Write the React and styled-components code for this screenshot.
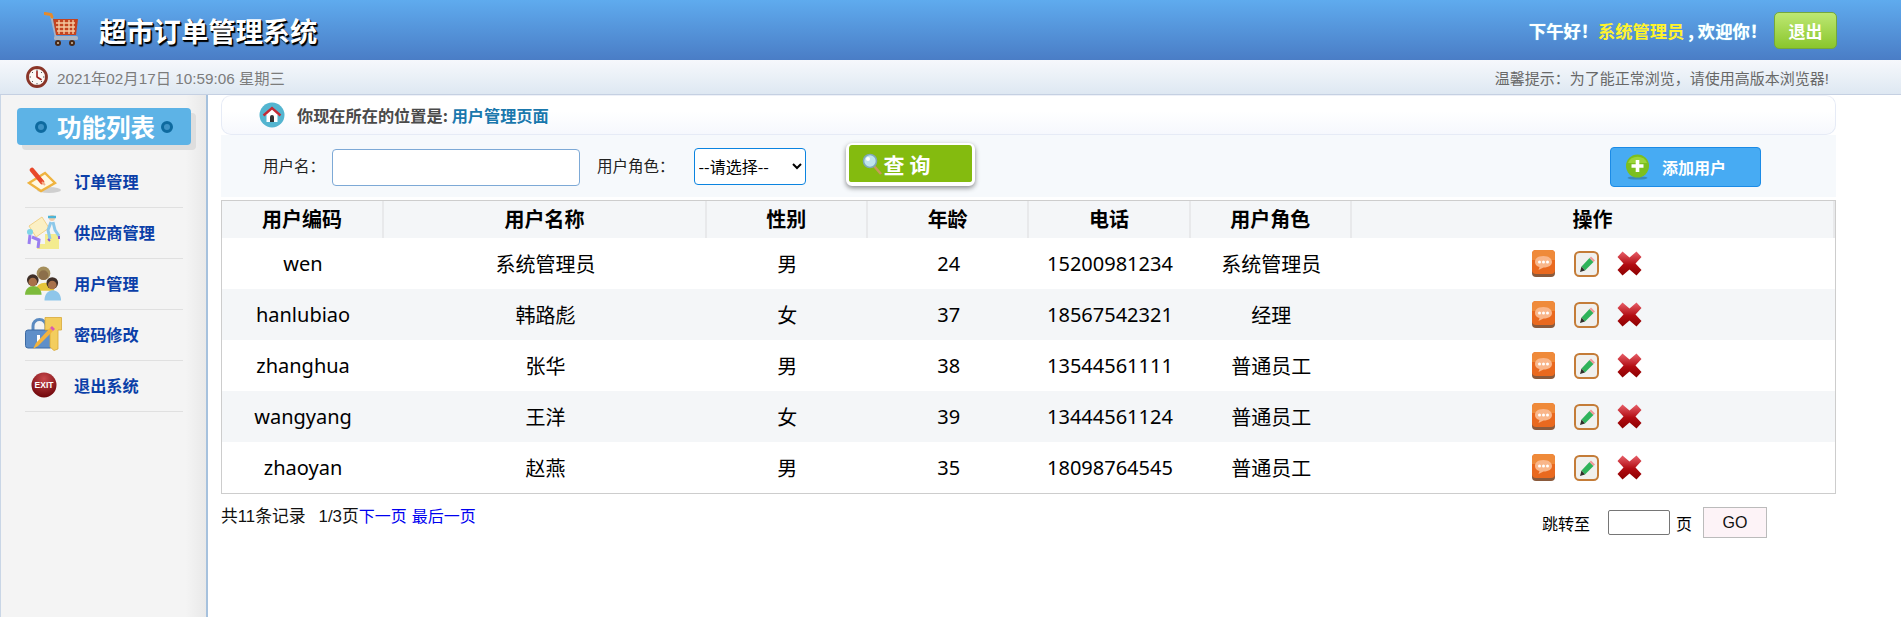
import React from 'react'
import styled, { createGlobalStyle } from 'styled-components'

const GlobalStyle = createGlobalStyle`
  html, body { margin: 0; padding: 0; height: 100%; background: #fff; overflow: hidden; }
  body { font-family: "Noto Sans", "Noto Sans CJK SC", sans-serif; color: #000; }
  * { box-sizing: border-box; }
`

const Page = styled.div`
  display: flex;
  flex-direction: column;
  height: 100vh;
`

const Header = styled.header`
  flex: none;
  height: 60px;
  display: flex;
  align-items: center;
  justify-content: space-between;
  padding: 0 64px 0 44px;
  background: linear-gradient(to bottom, #5fabee, #4a7dc6);
`

const Brand = styled.div`
  display: flex;
  align-items: center;
  gap: 19px;
`

const BrandTitle = styled.h1`
  margin: 0;
  font-family: "Noto Sans CJK SC", sans-serif;
  font-size: 27.3px;
  line-height: 60px;
  font-weight: 700;
  color: #fff;
  text-shadow: 1px 1px 0 #000, 1.5px 1.5px 1px #000;
`

const UserArea = styled.div`
  display: flex;
  align-items: center;
  gap: 7px;
`

const Greeting = styled.p`
  margin: 0;
  font-family: "Noto Sans CJK SC", sans-serif;
  font-size: 17.3px;
  font-weight: 700;
  color: #fff;
  text-shadow: 0 0 1px #9ff;
`

const UserName = styled.span`
  color: #fff32b;
  text-shadow: none;
`

const LogoutButton = styled.a`
  display: flex;
  align-items: center;
  justify-content: center;
  width: 63px;
  height: 37px;
  border: 1px solid #74a83c;
  border-radius: 5px;
  background: linear-gradient(to bottom, #bde873, #8ac62c);
  font-family: "Noto Sans CJK SC", sans-serif;
  font-size: 17px;
  font-weight: 700;
  color: #fff;
`

const StatusBar = styled.div`
  flex: none;
  height: 35px;
  display: flex;
  align-items: center;
  justify-content: space-between;
  padding: 0 72px 0 26px;
  border-bottom: 1px solid #c5d0e2;
  background: linear-gradient(to bottom, #f6f8fc, #dee8f2);
  font-family: "Liberation Sans", "Noto Sans CJK SC", sans-serif;
  font-size: 15.3px;
  color: #7c7c7c;
`

const Clock = styled.div`
  display: flex;
  align-items: center;
  gap: 9px;
`

const Tip = styled.div`
  font-size: 15px;
  color: #686868;
`

const Body = styled.div`
  flex: 1;
  display: flex;
  min-height: 0;
`

const Sidebar = styled.aside`
  flex: none;
  width: 208px;
  padding: 13px 24px 0 1px;
  border-left: 1px solid #c9d6e6;
  border-right: 2px solid #a6c1dd;
  background: linear-gradient(to right, #f4f4f4 90%, #e9e9e9);
`

const MenuTitle = styled.div`
  display: flex;
  align-items: center;
  justify-content: center;
  gap: 8px;
  width: 174px;
  height: 37px;
  margin-left: 15px;
  border-radius: 4px;
  background: #5db3e6;
  box-shadow: 5px 5px 0 #dedede;
  font-family: "Noto Sans CJK SC", sans-serif;
  font-size: 24.5px;
  font-weight: 700;
  color: #fff;
`

const MenuTitleText = styled.span`
  margin: 0 -2px 0 2px;
`

const MenuDot = styled.span`
  width: 12px;
  height: 12px;
  border-radius: 50%;
  border: 3px solid #0e6a9f;
  background: #3f93c6;
`

const Menu = styled.ul`
  list-style: none;
  margin: 12px 0 0 23px;
  padding: 0;
`

const MenuItem = styled.li`
  display: flex;
  align-items: center;
  gap: 12px;
  width: 158px;
  height: 51px;
  padding-bottom: 2px;
  border-bottom: 1px solid #e0e0e0;
  font-family: "Noto Sans CJK SC", sans-serif;
  font-size: 16.2px;
  font-weight: 700;
  color: #0b3fa8;
`

const MenuIcon = styled.span`
  display: flex;
  justify-content: center;
  width: 37px;
`

const Main = styled.main`
  flex: 1;
  min-width: 0;
  padding: 0 65px 0 13px;
`

const Location = styled.div`
  display: flex;
  align-items: center;
  gap: 12px;
  height: 40px;
  padding-left: 37px;
  border: 1px solid #e6ebf6;
  border-top-color: #eef1f8;
  border-radius: 10px;
  background: linear-gradient(to bottom, #fff 40%, #f6f8fd);
  font-family: "Noto Sans CJK SC", sans-serif;
  font-size: 16.2px;
  font-weight: 700;
  color: #4a4a4a;
`

const LocationLink = styled.span`
  color: #1a78ad;
`

const SearchBar = styled.div`
  display: flex;
  align-items: center;
  height: 62px;
  padding-left: 42px;
  background: #f6f9fc;
`

const FieldLabel = styled.label`
  font-family: "Noto Sans CJK SC", sans-serif;
  font-size: 15.5px;
  color: #222;
  margin-right: ${props => props.$gap}px;
  padding-bottom: 2px;
`

const TextInput = styled.input`
  width: 248px;
  height: 37px;
  margin-top: 2px;
  margin-right: 17px;
  border: 1px solid #7da9d6;
  border-radius: 4px;
  background: #fff;
`

const RoleSelect = styled.select`
  width: 112px;
  height: 37px;
  margin-right: 40px;
  border: 1px solid #0b84e0;
  border-radius: 4px;
  background: #fff;
  font-family: "Noto Sans CJK SC", sans-serif;
  font-size: 16px;
  color: #000;
`

const SearchButton = styled.button`
  display: flex;
  align-items: center;
  gap: 2px;
  align-self: flex-start;
  width: 129px;
  height: 43px;
  margin-top: 8px;
  padding: 0 0 0 13px;
  border: 3px solid #fff;
  border-top-width: 2px;
  border-bottom-width: 4px;
  border-radius: 6px;
  background: #84bb0f;
  box-shadow: 0 2px 5px rgba(0, 0, 0, 0.45);
  font-family: "Noto Sans CJK SC", sans-serif;
  font-size: 21px;
  font-weight: 700;
  letter-spacing: 5px;
  color: #fff;
`

const AddButton = styled.a`
  display: flex;
  align-items: center;
  gap: 12px;
  width: 151px;
  height: 40px;
  margin-top: 2px;
  margin-left: auto;
  margin-right: 75px;
  padding-left: 14px;
  border: 1px solid #1b8be6;
  border-radius: 4px;
  background: #47abf3;
  font-family: "Noto Sans CJK SC", sans-serif;
  font-size: 16px;
  font-weight: 700;
  color: #fff;
`

const Table = styled.table`
  width: 100%;
  margin-top: 3px;
  border: 1px solid #cdcdcd;
  border-collapse: separate;
  border-spacing: 0;
  table-layout: fixed;
  font-size: 20px;
  text-align: center;
`

const HeadCell = styled.th`
  width: ${props => props.$width}%;
  height: 37px;
  padding: 0 0 2px;
  border-right: 2px solid #e8e9eb;
  background: #f4f6f8;
  font-family: "Noto Sans CJK SC", sans-serif;
  font-size: 20px;
  font-weight: 700;
`

const Row = styled.tr`
  background: ${props => (props.$striped ? '#f4f6f8' : '#fff')};
`

const Cell = styled.td`
  height: 51px;
  padding: 0;
`

const Actions = styled.div`
  display: flex;
  justify-content: center;
  align-items: center;
  gap: 18px;
  padding-right: 12px;
`

const Footer = styled.div`
  display: flex;
  justify-content: space-between;
  font-family: "Liberation Sans", "Noto Sans CJK SC", sans-serif;
  font-size: 16px;
`

const PageInfo = styled.div`
  margin-top: 12px;
  line-height: 22px;
  color: #111;
`

const RecordCount = styled.span`
  font-size: 16.8px;
`

const PageLink = styled.a`
  color: #0000f0;
  margin-right: 5px;
`

const PageSpacer = styled.span`
  margin-left: 13px;
  font-size: 16.8px;
`

const Jump = styled.div`
  display: flex;
  align-items: center;
  height: 31px;
  margin-top: 13px;
  margin-right: 69px;
`

const JumpInput = styled.input`
  width: 62px;
  height: 25px;
  margin: 0 6px 0 18px;
  border: 1px solid #767676;
  border-radius: 2px;
`

const GoButton = styled.button`
  width: 64px;
  height: 31px;
  margin-left: 11px;
  border: 1px solid #bbb;
  background: #fdf3f7;
  font-family: "Liberation Sans", sans-serif;
  font-size: 16px;
  color: #111;
`

const CartIcon = () => (
  <svg width="36" height="36" viewBox="0 0 36 36">
    <path d="M7 3 L12 26 H30" fill="none" stroke="#a5b3c6" strokeWidth="2" />
    <path d="M1 1.5 L7 2.5 L8 5" fill="none" stroke="#e58a2b" strokeWidth="3" strokeLinecap="round" />
    <path d="M9 7 H34 L32 23 H12 Z" fill="#c4431f" />
    <path d="M12 11 H31 M12 15 H31 M13 19 H31 M15 8 V22 M20 8 V22 M25 8 V22 M29 8 V22" stroke="#f3c9a0" strokeWidth="1.4" />
    <rect x="10" y="24" width="24" height="4" rx="1.5" fill="#aab6c4" />
    <circle cx="14" cy="31" r="3" fill="#4a2a18" />
    <circle cx="28" cy="31" r="3" fill="#4a2a18" />
    <circle cx="14" cy="31" r="1" fill="#d7c2a8" />
    <circle cx="28" cy="31" r="1" fill="#d7c2a8" />
  </svg>
)

const ClockIcon = () => (
  <svg width="22" height="22" viewBox="0 0 22 22">
    <circle cx="11" cy="11" r="9.5" fill="#fbf8f4" stroke="#8a3528" strokeWidth="2.8" />
    <path d="M11 3.5 V5 M11 17 V18.5 M3.5 11 H5 M17 11 H18.5 M6 6 L7 7 M16 6 L15 7 M6 16 L7 15 M16 16 L15 15" stroke="#555" strokeWidth="1" />
    <path d="M11 11 V5.5 M11 11 L15 13.5" stroke="#9a1f1a" strokeWidth="1.6" strokeLinecap="round" />
  </svg>
)

const HomeIcon = () => (
  <svg width="26" height="26" viewBox="0 0 26 26">
    <circle cx="13" cy="13" r="12.5" fill="#54b5d0" />
    <path d="M13 6 L21 13 H18.5 V20 H7.5 V13 H5 Z" fill="#fff" />
    <path d="M4.5 13.5 L13 6 L21.5 13.5" fill="none" stroke="#c32a35" strokeWidth="2.4" />
    <path d="M11 20 V15 A2 2 0 0 1 15 15 V20 Z" fill="#333" />
  </svg>
)

const OrderIcon = () => (
  <svg width="34" height="28" viewBox="0 0 34 28">
    <ellipse cx="22" cy="23" rx="12" ry="3" fill="#cfcfcf" />
    <path d="M2 16 L18 6 L28 16 L14 24 Z" fill="#fff8e2" stroke="#efb33f" strokeWidth="2.4" />
    <path d="M5 3 L15 15" stroke="#e8482a" strokeWidth="4.5" strokeLinecap="round" />
    <path d="M15 15 L18 18" stroke="#f4b08a" strokeWidth="2" />
  </svg>
)

const SupplierIcon = () => (
  <svg width="37" height="36" viewBox="0 0 37 36">
    <path d="M20 20 H34 V35 H12 V30 H20 Z" fill="#f3eb8e" />
    <path d="M4 12 L17 3 L24 14 L11 23 Z" fill="#fbf0c4" stroke="#f1d28a" />
    <circle cx="27" cy="4" r="3" fill="#f5cba7" />
    <path d="M23 3 H31" stroke="#4db4d6" strokeWidth="2.5" />
    <path d="M26 8 L23 16 L25 25 M28 8 L30 16 L34 22" stroke="#8cc8ea" strokeWidth="3" fill="none" />
    <path d="M23 25 L25 27 M34 22 L34 25" stroke="#8b5fd8" strokeWidth="2" />
    <circle cx="5" cy="18" r="3" fill="#7fd4e6" />
    <path d="M5 21 L4 30 M7 23 L14 26 L13 34" stroke="#9a7ff0" strokeWidth="3" fill="none" />
  </svg>
)

const UsersIcon = () => (
  <svg width="38" height="36" viewBox="0 0 38 36">
    <path d="M11 26 C11 15 30 15 30 26 Z" fill="#e6c53c" />
    <circle cx="19" cy="8" r="7" fill="#a58f5c" />
    <circle cx="19" cy="10" r="5" fill="#8c6f4a" />
    <path d="M0 30 C0 18 17 18 17 30 Z" fill="#7dbb3c" />
    <circle cx="8" cy="15" r="6" fill="#3f2f28" />
    <circle cx="8" cy="17" r="4.4" fill="#a8714a" />
    <path d="M20 36 C20 22 37 22 37 36 Z" fill="#8ec6ea" />
    <circle cx="28" cy="18" r="6" fill="#3f2f28" />
    <circle cx="28" cy="20" r="4.4" fill="#a8714a" />
  </svg>
)

const PasswordIcon = () => (
  <svg width="37" height="34" viewBox="0 0 37 34">
    <path d="M8 14 V9 A6.5 6.5 0 0 1 21 9 V14" fill="none" stroke="#5b8ac0" strokeWidth="3" />
    <rect x="0.5" y="13" width="27" height="18" rx="2.5" fill="#5f8fc9" stroke="#3d6aa3" />
    <rect x="12" y="18" width="3" height="8" fill="#fff" />
    <path d="M20 0.5 H36.5 V13 H33 V32 L29 33.5 L25 30 V13 H20 Z" fill="#f3cd5e" stroke="#d8a838" strokeWidth="0.8" />
    <path d="M8 32 L11 26 L25 11 L28 14 L13 29 Z" fill="#f2b33d" />
    <path d="M25 11 L27 9 L30 12 L28 14 Z" fill="#d95ab0" />
  </svg>
)

const ExitIcon = () => (
  <svg width="26" height="26" viewBox="0 0 26 26">
    <defs>
      <radialGradient id="exitBall" cx="50%" cy="25%" r="75%">
        <stop offset="0%" stopColor="#c8484c" />
        <stop offset="100%" stopColor="#6f060a" />
      </radialGradient>
    </defs>
    <circle cx="13" cy="13" r="12.5" fill="url(#exitBall)" />
    <text x="13" y="16" textAnchor="middle" fontFamily="Liberation Sans" fontSize="8.5" fontWeight="700" fill="#fff">EXIT</text>
  </svg>
)

const MagnifierIcon = () => (
  <svg width="20" height="22" viewBox="0 0 20 22">
    <path d="M12 13 L19 21" stroke="#c89a5a" strokeWidth="2.6" />
    <circle cx="8" cy="8" r="6.5" fill="#bfe4ee" stroke="#7fa8b8" strokeWidth="1.6" />
    <circle cx="6" cy="6" r="2" fill="#fff" />
  </svg>
)

const PlusIcon = () => (
  <svg width="25" height="26" viewBox="0 0 25 26">
    <ellipse cx="12.5" cy="24" rx="10" ry="1.6" fill="#3b8ab8" />
    <circle cx="12.5" cy="12" r="11.5" fill="#7cbf1e" />
    <path d="M3 9 A10 9 0 0 1 22 9 Z" fill="#9bd53a" />
    <path d="M12.5 6 V18 M6.5 12 H18.5" stroke="#fff" strokeWidth="3.6" />
  </svg>
)

const ViewIcon = () => (
  <svg width="24" height="27" viewBox="0 0 24 27">
    <rect y="2" width="23" height="25" rx="4" fill="#8a5a3c" />
    <rect width="23" height="24" rx="4" fill="#e9691f" />
    <path d="M0 4 A4 4 0 0 1 4 0 H19 A4 4 0 0 1 23 4 V10 H0 Z" fill="#ef8a3a" />
    <path d="M11.5 6 C5 6 3 9 3 12 C3 15 5.5 16.5 7.5 17 L6.5 20 L11.5 17.5 C17 17.5 20 15 20 12 C20 9 17 6 11.5 6 Z" fill="#f9b68a" />
    <circle cx="7.5" cy="12" r="1.5" fill="#fff" />
    <circle cx="11.5" cy="12" r="1.5" fill="#fff" />
    <circle cx="15.5" cy="12" r="1.5" fill="#fff" />
  </svg>
)

const EditIcon = () => (
  <svg width="25" height="26" viewBox="0 0 25 26">
    <rect x="1" y="1" width="23" height="24" rx="4.5" fill="#f0f0ee" stroke="#c47c38" strokeWidth="2" />
    <path d="M7.5 15.5 L15.5 7 L19.5 11 L11 19.5 Z" fill="#2fb35a" />
    <path d="M15.5 7 L17 5.5 L21 9.5 L19.5 11 Z" fill="#ef9a9a" />
    <path d="M7.5 15.5 L6 21 L11 19.5 Z" fill="#30302c" />
  </svg>
)

const DeleteIcon = () => (
  <svg width="25" height="25" viewBox="0 0 25 25">
    <defs>
      <linearGradient id="crossRed" x1="0" y1="0" x2="0" y2="1">
        <stop offset="0%" stopColor="#e8606a" />
        <stop offset="55%" stopColor="#b20c12" />
        <stop offset="100%" stopColor="#8c0000" />
      </linearGradient>
    </defs>
    <path d="M5.5 0.5 L12.5 6.5 L19.5 0.5 L24.5 6 L18.5 12.5 L24.5 19 L19.5 24.5 L12.5 18.5 L5.5 24.5 L0.5 19 L6.5 12.5 L0.5 6 Z" fill="url(#crossRed)" />
  </svg>
)

const columns = [
  { title: '用户编码', width: 10.05 },
  { title: '用户名称', width: 20 },
  { title: '性别', width: 10 },
  { title: '年龄', width: 10 },
  { title: '电话', width: 10 },
  { title: '用户角色', width: 10 },
  { title: '操作', width: 29.95 }
]

const users = [
  ['wen', '系统管理员', '男', '24', '15200981234', '系统管理员'],
  ['hanlubiao', '韩路彪', '女', '37', '18567542321', '经理'],
  ['zhanghua', '张华', '男', '38', '13544561111', '普通员工'],
  ['wangyang', '王洋', '女', '39', '13444561124', '普通员工'],
  ['zhaoyan', '赵燕', '男', '35', '18098764545', '普通员工']
]

const menu = [
  { label: '订单管理', icon: <OrderIcon /> },
  { label: '供应商管理', icon: <SupplierIcon /> },
  { label: '用户管理', icon: <UsersIcon /> },
  { label: '密码修改', icon: <PasswordIcon /> },
  { label: '退出系统', icon: <ExitIcon /> }
]

export default function App () {
  return (
    <Page>
      <GlobalStyle />
      <Header>
        <Brand>
          <CartIcon />
          <BrandTitle>超市订单管理系统</BrandTitle>
        </Brand>
        <UserArea>
          <Greeting>下午好！<UserName>系统管理员</UserName> , 欢迎你！</Greeting>
          <LogoutButton>退出</LogoutButton>
        </UserArea>
      </Header>
      <StatusBar>
        <Clock>
          <ClockIcon />
          <span>2021年02月17日 10:59:06 星期三</span>
        </Clock>
        <Tip>温馨提示：为了能正常浏览，请使用高版本浏览器!</Tip>
      </StatusBar>
      <Body>
        <Sidebar>
          <MenuTitle>
            <MenuDot />
            <MenuTitleText>功能列表</MenuTitleText>
            <MenuDot />
          </MenuTitle>
          <Menu>
            {menu.map(item => (
              <MenuItem key={item.label}>
                <MenuIcon>{item.icon}</MenuIcon>
                {item.label}
              </MenuItem>
            ))}
          </Menu>
        </Sidebar>
        <Main>
          <Location>
            <HomeIcon />
            <span>你现在所在的位置是: <LocationLink>用户管理页面</LocationLink></span>
          </Location>
          <SearchBar>
            <FieldLabel $gap={7}>用户名：</FieldLabel>
            <TextInput />
            <FieldLabel $gap={19}>用户角色：</FieldLabel>
            <RoleSelect defaultValue=''>
              <option value=''>--请选择--</option>
            </RoleSelect>
            <SearchButton>
              <MagnifierIcon />
              查询
            </SearchButton>
            <AddButton>
              <PlusIcon />
              添加用户
            </AddButton>
          </SearchBar>
          <Table>
            <thead>
              <tr>
                {columns.map(col => (
                  <HeadCell key={col.title} $width={col.width}>{col.title}</HeadCell>
                ))}
              </tr>
            </thead>
            <tbody>
              {users.map((user, i) => (
                <Row key={user[0]} $striped={i % 2 === 1}>
                  {user.map((value, j) => <Cell key={j}>{value}</Cell>)}
                  <Cell>
                    <Actions>
                      <ViewIcon />
                      <EditIcon />
                      <DeleteIcon />
                    </Actions>
                  </Cell>
                </Row>
              ))}
            </tbody>
          </Table>
          <Footer>
            <PageInfo>
              <RecordCount>共11条记录</RecordCount><PageSpacer>1/3页</PageSpacer><PageLink>下一页</PageLink><PageLink>最后一页</PageLink>
            </PageInfo>
            <Jump>
              跳转至
              <JumpInput />
              页
              <GoButton>GO</GoButton>
            </Jump>
          </Footer>
        </Main>
      </Body>
    </Page>
  )
}
